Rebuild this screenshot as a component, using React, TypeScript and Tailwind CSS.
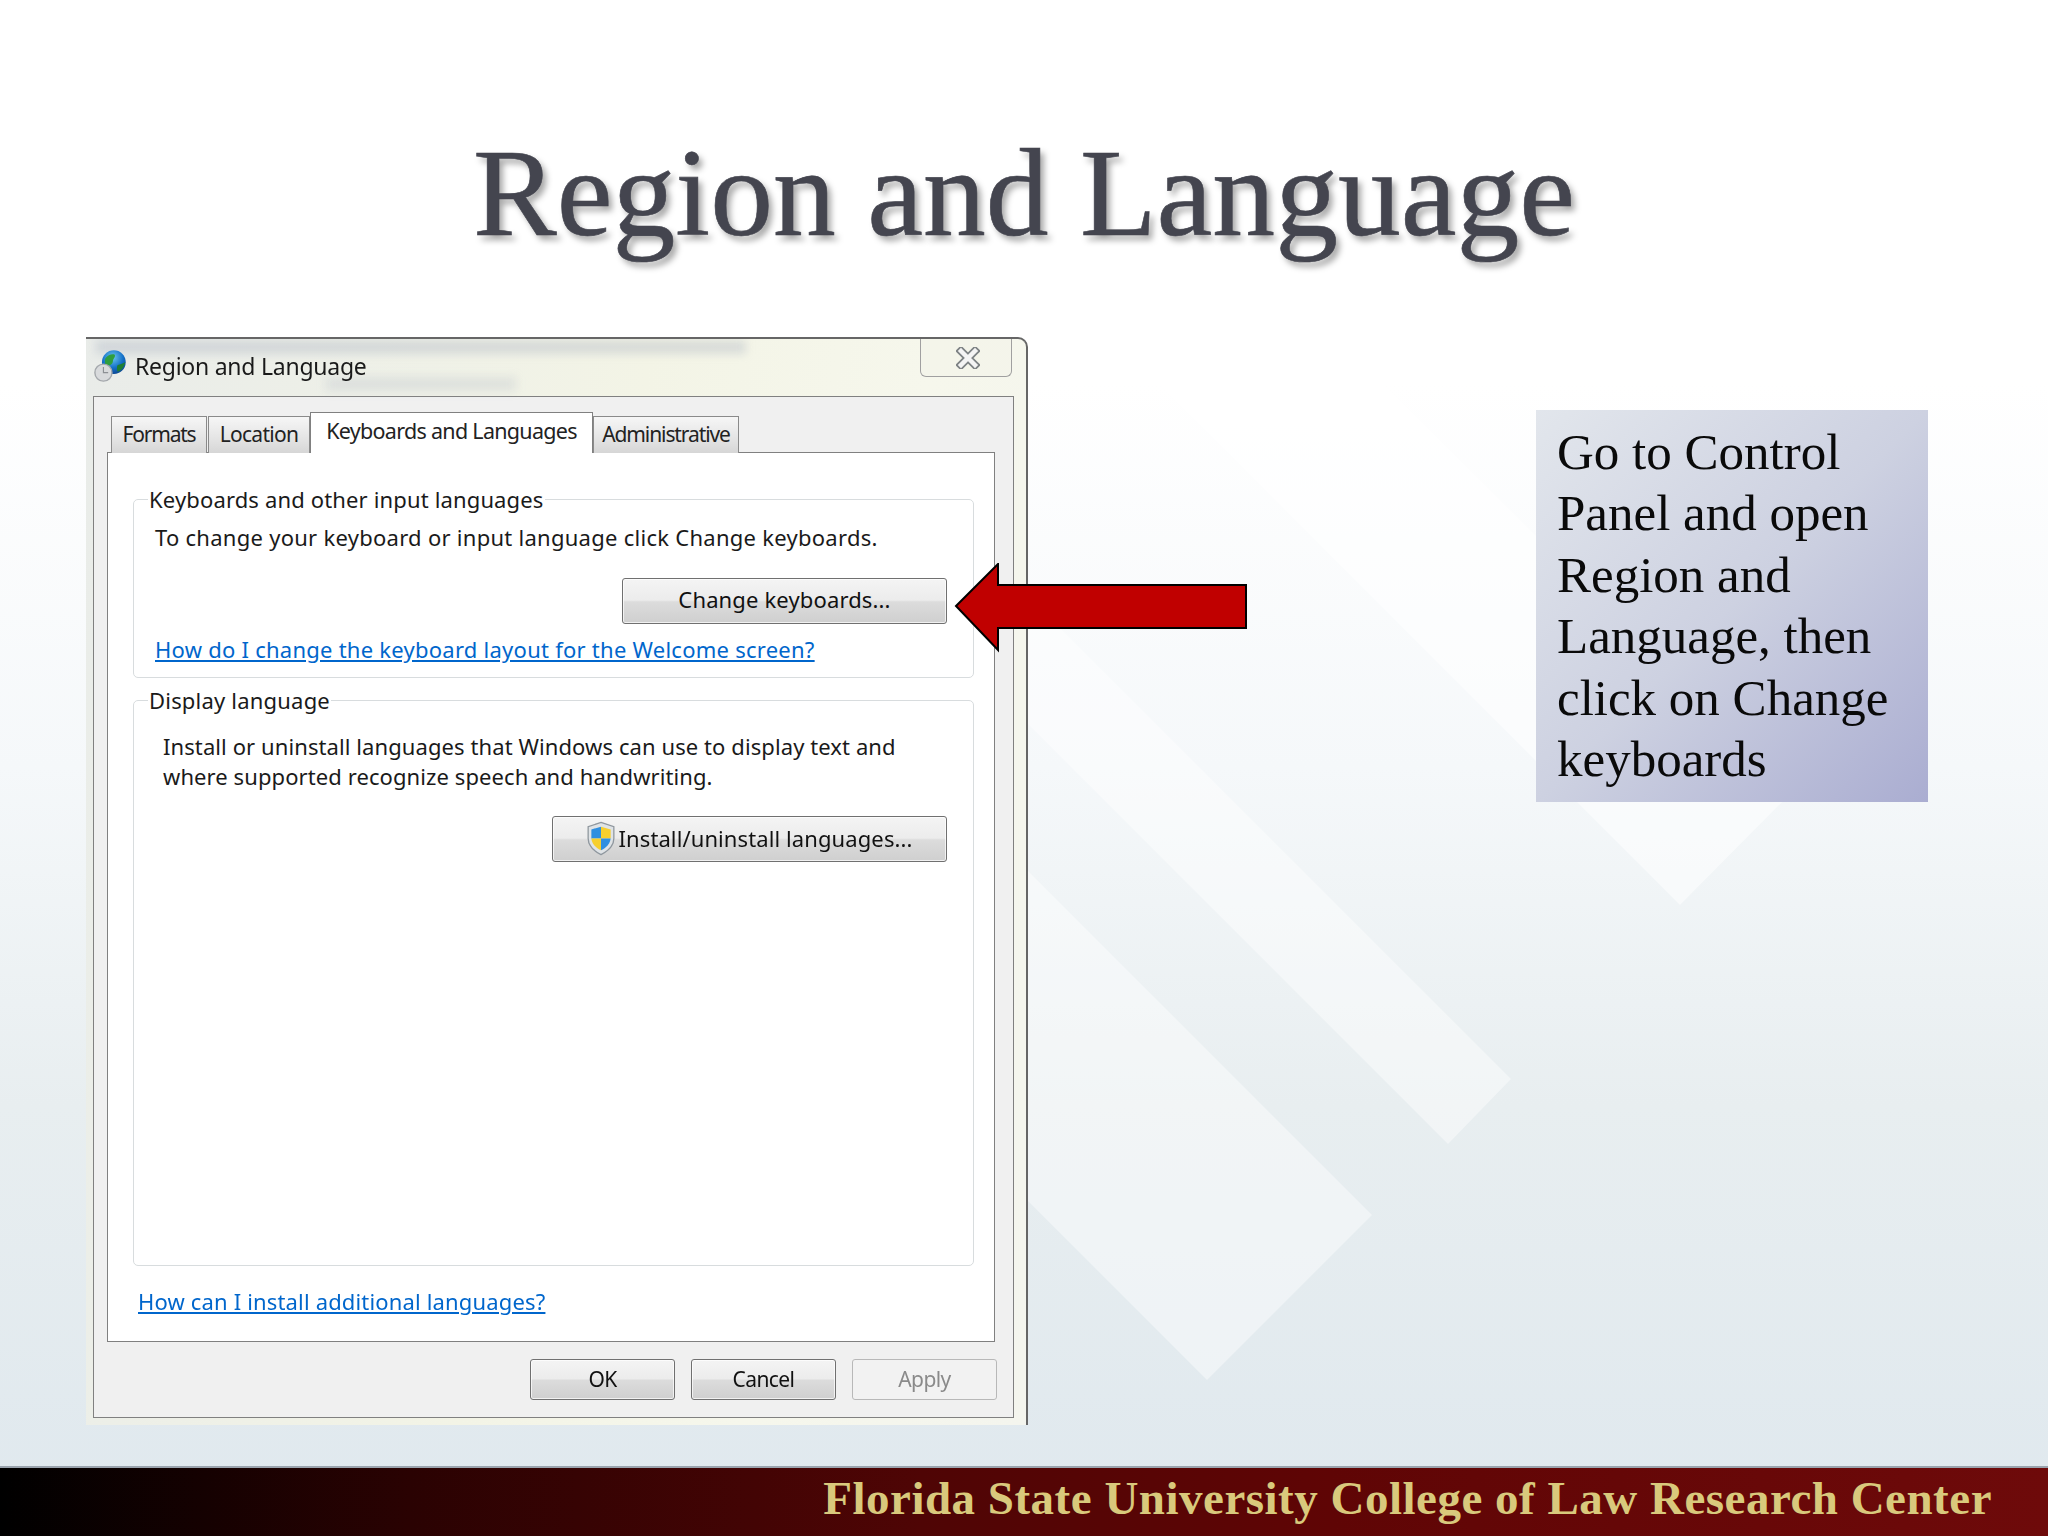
import React from "react";

const uiFont = "font-['Noto_Sans','Open_Sans',sans-serif]";
const btn =
  "flex items-center justify-center rounded-[3px] border border-[#707070] bg-[linear-gradient(180deg,#f4f4f4_0%,#ececec_48%,#dcdcdc_52%,#cfcfcf_100%)] text-[#111] shadow-[inset_0_0_0_1px_rgba(255,255,255,0.7)]";

function Globe() {
  return (
    <svg width="36" height="36" viewBox="0 0 38 38" className="shrink-0">
      <defs>
        <radialGradient id="glb" cx="0.45" cy="0.3" r="0.8">
          <stop offset="0" stopColor="#6cc8f0" />
          <stop offset="0.55" stopColor="#1470c8" />
          <stop offset="1" stopColor="#0a3a80" />
        </radialGradient>
      </defs>
      <circle cx="22" cy="15" r="12.5" fill="url(#glb)" />
      <path d="M13 11c3-4 7-5 10-4 1 3-2 4-2 7s-4 5-6 5-3-5-2-8z" fill="#2f9e3f" />
      <path d="M26 18c3-1 6-2 8-3-1 5-4 9-8 10-1-2-1-5 0-7z" fill="#1f7f34" />
      <circle cx="11" cy="26" r="9" fill="#d8dadc" stroke="#a4a8ac" strokeWidth="1.5" />
      <path d="M11 20v6h5" fill="none" stroke="#8c9094" strokeWidth="1.2" />
    </svg>
  );
}

function Shield() {
  return (
    <svg width="30" height="35" viewBox="0 0 28 32" className="shrink-0">
      <path d="M14 1l12 4v11c0 8-6 12-12 15C8 28 2 24 2 16V5z" fill="#dfe3e6" stroke="#8f979e" strokeWidth="1.2" />
      <path d="M14 5v11H5V7.500z" fill="#2f8fe0" />
      <path d="M14 5l9 2.500V16h-9z" fill="#f6cf2e" />
      <path d="M5 16h9v11c-5-2.500-8.500-6-9-11z" fill="#f6cf2e" />
      <path d="M23 16h-9v11c5-2.500 8.500-6 9-11z" fill="#2f8fe0" />
    </svg>
  );
}

function Tab({ label, w, track }: { label: string; w: string; track: string }) {
  return (
    <div className={`flex h-[37px] items-center justify-center border border-b-0 border-[#8a8a8a] bg-[linear-gradient(180deg,#f6f6f6,#e4e4e4_60%,#d6d6d6)] text-[21px] text-[#222] ${track} ${w}`}>
      {label}
    </div>
  );
}

export default function App() {
  return (
    <div className="relative flex h-[1536px] w-[2048px] flex-col overflow-hidden bg-[linear-gradient(180deg,#ffffff_0%,#ffffff_25%,#f5f8fa_50%,#e8eef0_72%,#dfe8ee_100%)]">
      <svg className="absolute inset-0" width="2048" height="1536" viewBox="0 0 2048 1536">
        <polygon points="1680,905 1792,792 1150,150 1000,150 900,125" fill="#ffffff" fillOpacity="0.5" />
        <polygon points="1511,1079 1448,1144 900,596 900,468" fill="#ffffff" fillOpacity="0.42" />
        <polygon points="1372,1215 1207,1380 900,1073 900,743" fill="#ffffff" fillOpacity="0.42" />
      </svg>

      <header className="relative flex h-[337px] justify-center pt-[118px]">
        <h1 className="font-['Liberation_Serif',serif] text-[125.6px] leading-[150px] font-normal text-[#44454f] [text-shadow:4px_5px_6px_rgba(0,0,0,0.35)] [-webkit-text-stroke:0.6px_#44454f]">
          Region and Language
        </h1>
      </header>

      <main className="relative flex flex-1 items-start">
        <section className={`relative ml-[86px] flex h-[1088px] w-[942px] flex-col overflow-hidden rounded-tr-[10px] border-t-2 border-r-2 border-[#666] bg-[linear-gradient(100deg,#e9ece9_0%,#f3f4e6_50%,#f6f7ec_75%,#f4f5ee_100%)] blur-[0.35px] ${uiFont}`}>
          <div className="absolute top-[1px] left-[10px] h-[14px] w-[650px] bg-[#9aa6b8]/30 blur-[4px]" />
          <div className="absolute top-[38px] left-[240px] h-[14px] w-[190px] bg-[#9aa6b8]/20 blur-[5px]" />
          <div className="relative flex h-[57px] items-start justify-between pl-[7px]">
            <div className="mt-[9px] flex items-center gap-[6px]">
              <Globe />
              <span className="text-[23px] tracking-[-0.25px] text-[#1a1a1a]">Region and Language</span>
            </div>
            <div className="mr-[14px] flex h-[38px] w-[92px] items-center justify-center rounded-b-[6px] border border-t-0 border-[#a0a0a0] bg-[#f4f4ea]/70 pl-[4px]">
              <svg width="24" height="22" viewBox="0 0 24 22">
                <path d="M5 4l14 14M19 4L5 18" stroke="#7d8284" strokeWidth="8" strokeLinecap="square" />
                <path d="M5 4l14 14M19 4L5 18" stroke="#f4f4f4" strokeWidth="4.500" strokeLinecap="square" />
              </svg>
            </div>
          </div>

          <div className="mr-[13px] ml-[7px] flex h-[1022px] w-[921px] flex-col border border-[#808080] bg-[#f0f0f0]">
            <div className="relative z-10 -mb-px flex h-[56px] items-end pl-[17px]">
              <Tab label="Formats" w="w-[96px]" track="tracking-[-1.2px]" />
              <div className="w-[1px]" />
              <Tab label="Location" w="w-[102px]" track="tracking-[-0.7px]" />
              <div className="flex h-[41px] w-[283px] items-start justify-center border border-b-0 border-[#808080] bg-white pt-[2px] text-[21.500px] tracking-[-0.7px] text-[#222]">
                Keyboards and Languages
              </div>
              <Tab label="Administrative" w="w-[146px]" track="tracking-[-1.1px]" />
            </div>

            <div className="mr-[18px] ml-[13px] flex h-[890px] flex-col border border-[#808080] bg-white px-[25px] pt-[31px] pr-[20px] text-[#1a1a1a]">
              <fieldset className="h-[194px] rounded-[5px] border border-[#d8dcde] pr-[26px] pl-[21px]">
                <legend className="ml-[-7px] px-[1px] text-[22px] leading-[30px] tracking-[0.15px]">Keyboards and other input languages</legend>
                <p className="mt-[8px] text-[22px] leading-[30px] tracking-[0.27px]">To change your keyboard or input language click Change keyboards.</p>
                <div className="mt-[26px] flex justify-end">
                  <button className={`h-[46px] w-[325px] pb-[3px] text-[22px] tracking-[0.14px] ${btn}`}>Change keyboards...</button>
                </div>
                <a className="mt-[10px] block text-[22px] leading-[30px] tracking-[0.25px] text-[#0066cc] underline">How do I change the keyboard layout for the Welcome screen?</a>
              </fieldset>

              <fieldset className="mt-[7px] h-[581px] rounded-[5px] border border-[#d8dcde] pr-[26px] pl-[29px]">
                <legend className="ml-[-15px] px-[1px] text-[22px] leading-[30px] tracking-[0.2px]">Display language</legend>
                <p className="mt-[16px] text-[22px] leading-[30px] tracking-[0.09px]">
                  Install or uninstall languages that Windows can use to display text and
                  <br />
                  where supported recognize speech and handwriting.
                </p>
                <div className="mt-[25px] flex justify-end">
                  <button className={`h-[46px] w-[395px] gap-[2px] pb-[1px] text-[22px] tracking-[0.1px] ${btn}`}>
                    <Shield />
                    Install/uninstall languages...
                  </button>
                </div>
              </fieldset>

              <a className="mt-[20px] ml-[5px] block text-[22px] leading-[30px] tracking-[0.16px] text-[#0066cc] underline">How can I install additional languages?</a>
            </div>

            <div className="mr-[16px] flex flex-1 items-start justify-end gap-[16px] pt-[17px] text-[21px] tracking-[-0.6px]">
              <button className={`h-[41px] w-[145px] ${btn}`}>OK</button>
              <button className={`h-[41px] w-[145px] ${btn}`}>Cancel</button>
              <button className="flex h-[41px] w-[145px] items-center justify-center rounded-[3px] border border-[#b8b8b8] bg-[#f2f2f2] text-[#8a8a8a]">Apply</button>
            </div>
          </div>
        </section>

        <aside className="mt-[73px] ml-[508px] h-[392px] w-[392px] bg-[linear-gradient(135deg,#e2e6ec_0%,#cdd1e1_50%,#aaadd1_100%)] pt-[12px] pl-[21px] font-['Liberation_Serif',serif] text-[51px] leading-[61.4px] text-[#0a0a0a]">
          Go to Control
          <br />
          Panel and open
          <br />
          Region and
          <br />
          Language, then
          <br />
          click on Change
          <br />
          keyboards
        </aside>

        <svg className="absolute top-[226px] left-[953px]" width="296" height="90" viewBox="0 0 296 90">
          <polygon points="3,43 45,1 45,22 293,22 293,65 45,65 45,87" fill="#c00000" stroke="#000" strokeWidth="2" />
        </svg>
      </main>

      <footer className="relative flex h-[70px] items-start justify-end border-t-2 border-[#9aa3ad] bg-[linear-gradient(90deg,#000000_0%,#2a0202_20%,#4f0505_45%,#5f0505_65%,#6e0a0a_100%)] pr-[56px]">
        <span className="font-['Liberation_Serif',serif] text-[47px] leading-[60px] font-bold tracking-[0.5px] text-[#d9c97c]">
          Florida State University College of Law Research Center
        </span>
      </footer>
    </div>
  );
}
